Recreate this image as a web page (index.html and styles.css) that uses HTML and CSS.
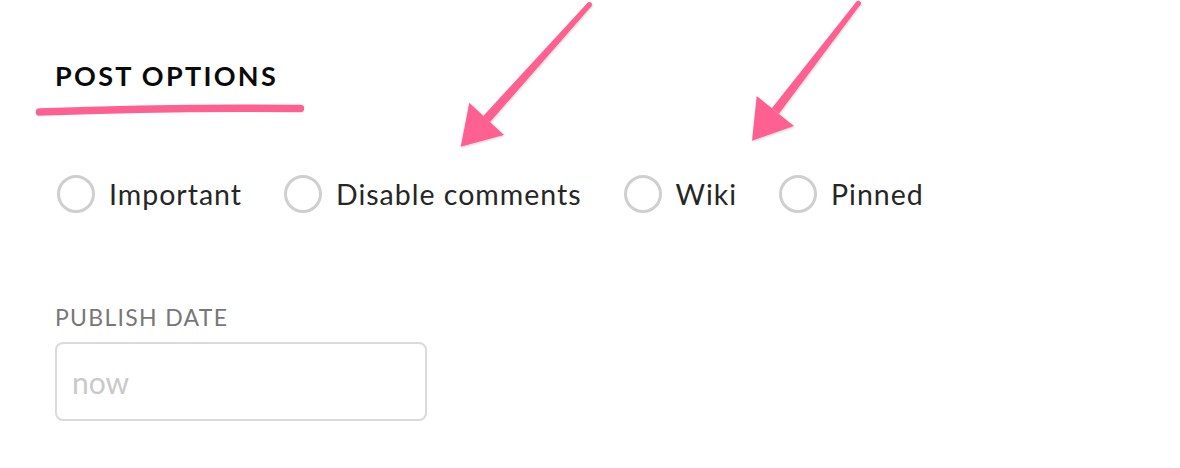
FILE: index.html
```html
<!DOCTYPE html>
<html>
<head>
<meta charset="utf-8">
<link rel="stylesheet" href="styles.css">
</head>
<body>
<div class="page">
  <h2 class="heading">POST OPTIONS</h2>
  <div class="options">
    <label class="option"><span class="radio"></span><span class="label">Important</span></label>
    <label class="option"><span class="radio"></span><span class="label">Disable comments</span></label>
    <label class="option"><span class="radio"></span><span class="label">Wiki</span></label>
    <label class="option"><span class="radio"></span><span class="label">Pinned</span></label>
  </div>
  <div class="field">
    <div class="field-label">PUBLISH DATE</div>
    <div class="input"><span class="placeholder">now</span></div>
  </div>
</div>
<svg class="annot" width="1180" height="468" viewBox="0 0 1180 468" xmlns="http://www.w3.org/2000/svg">
  <defs>
    <filter id="sh" x="-20%" y="-20%" width="140%" height="140%">
      <feDropShadow dx="0.5" dy="1" stdDeviation="1" flood-color="#000" flood-opacity="0.18"/>
    </filter>
  </defs>
  <path d="M39.5 112 Q170 107 300.5 108.5" stroke="#fe6191" stroke-width="7.5" stroke-linecap="round" fill="none"/>
  <g fill="#fe6191" filter="url(#sh)">
    <polygon points="591.2,6.4 587.4,3.0 483.3,115.9 490.1,121.9"/>
    <circle cx="589.3" cy="4.7" r="2.6"/>
    <polygon points="460.7,146.7 469.3,102.7 504,135"/>
    <polygon points="860.3,4.8 856.3,1.8 771.8,108.3 779,113.7"/>
    <circle cx="858.3" cy="3.3" r="2.6"/>
    <polygon points="752,140.7 756.7,96 794,126"/>
  </g>
</svg>
</body>
</html>
```
FILE: styles.css
```css
html, body {
  margin: 0;
  padding: 0;
  background: #fff;
}
body {
  font-family: "Lato", "Open Sans", sans-serif;
  width: 1180px;
  height: 468px;
  overflow: hidden;
  position: relative;
}
.page {
  padding: 58px 0 0 55px;
  display: flex;
  flex-direction: column;
}
.heading {
  margin: 0;
  font-size: 27px;
  line-height: 36px;
  font-weight: 700;
  color: #0a0a0a;
  letter-spacing: 2.3px;
}
.options {
  display: flex;
  align-items: center;
  gap: 42px;
  margin-top: 81px;
  margin-left: 2px;
}
.option {
  display: flex;
  align-items: center;
  gap: 14px;
}
.radio {
  width: 32px;
  height: 32px;
  border: 3px solid #cfcfcf;
  border-radius: 50%;
  flex: none;
}
.label {
  font-size: 28.5px;
  line-height: 38px;
  color: #262626;
  letter-spacing: 1px;
}
.field {
  margin-top: 90px;
  display: flex;
  flex-direction: column;
}
.field-label {
  font-size: 23px;
  line-height: 28px;
  color: #777;
  letter-spacing: 1.3px;
}
.input {
  margin-top: 11px;
  height: 75px;
  border: 2px solid #dadada;
  border-radius: 8px;
  display: flex;
  align-items: center;
  padding-left: 15px;
  box-sizing: content-box;
  width: 353px;
}
.placeholder {
  font-size: 30px;
  color: #c9c9c9;
}
.annot {
  position: absolute;
  left: 0;
  top: 0;
  pointer-events: none;
}
```
